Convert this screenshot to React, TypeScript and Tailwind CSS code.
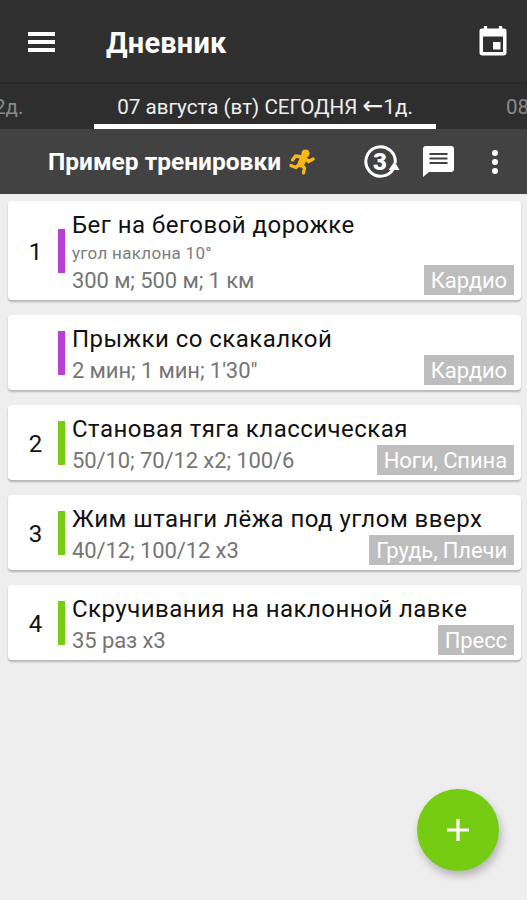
type Exercise = {
  num: string;
  title: string;
  note?: string;
  sets: string;
  tag: string;
  color: string;
};

const exercises: Exercise[] = [
  { num: '1', title: 'Бег на беговой дорожке', note: 'угол наклона 10°', sets: '300 м; 500 м; 1 км', tag: 'Кардио', color: 'bg-[#b93fd3]' },
  { num: '', title: 'Прыжки со скакалкой', sets: '2 мин; 1 мин; 1\'30"', tag: 'Кардио', color: 'bg-[#b93fd3]' },
  { num: '2', title: 'Становая тяга классическая', sets: '50/10; 70/12 x2; 100/6', tag: 'Ноги, Спина', color: 'bg-[#76cc12]' },
  { num: '3', title: 'Жим штанги лёжа под углом вверх', sets: '40/12; 100/12 x3', tag: 'Грудь, Плечи', color: 'bg-[#76cc12]' },
  { num: '4', title: 'Скручивания на наклонной лавке', sets: '35 раз x3', tag: 'Пресс', color: 'bg-[#76cc12]' },
];

function CalendarIcon() {
  return (
    <svg className="ml-auto h-8 w-[30px]" viewBox="0 0 30 32" fill="none">
      <path d="M7.500 1v6M22.500 1v6" stroke="white" strokeWidth="3.2" />
      <path d="M4 3.500h22a2.500 2.500 0 0 1 2.500 2.500v21.500a3 3 0 0 1-3 3h-21a3 3 0 0 1-3-3V6a2.500 2.500 0 0 1 2.500-2.500z" fill="white" />
      <path d="M5 11.500h20v15.500H5z" fill="#303030" />
      <path d="M15 17h7.500v7.500H15z" fill="white" />
    </svg>
  );
}

function RunnerIcon() {
  return (
    <svg className="ml-2 h-[26px] w-[26px]" viewBox="0 0 26 26" fill="none" stroke="#fcb714" strokeLinecap="round" strokeLinejoin="round">
      <circle cx="16.500" cy="4.500" r="4" fill="#fcb714" stroke="none" />
      <path d="M14.500 8.500l-2.500 6.500" strokeWidth="7" />
      <path d="M13 8L6.500 7L3.500 11" strokeWidth="3.300" />
      <path d="M16.500 9.500L19.500 12.500l4.500-2.500" strokeWidth="3.300" />
      <path d="M10.500 15L7 18.500L2 16.500" strokeWidth="3.300" />
      <path d="M12.500 15.500l3 3.500l-1 5" strokeWidth="3.300" />
    </svg>
  );
}

function RepeatIcon() {
  return (
    <div className="relative flex h-9 w-9 items-center pl-[9px]">
      <svg className="absolute inset-0 h-9 w-9" viewBox="0 0 36 36" fill="none">
        <path d="M29.500 24.500A14.700 14.700 0 1 1 31.200 19" stroke="white" strokeWidth="3" />
        <path d="M24.500 26l6-8.500 5 8.500z" fill="white" />
      </svg>
      <span className="relative text-[24px] leading-none font-black">3</span>
    </div>
  );
}

function CommentIcon() {
  return (
    <svg className="h-[31px] w-[31px]" viewBox="0 0 31 31">
      <path d="M3 0h25a3 3 0 0 1 3 3v20a3 3 0 0 1-3 3H6l-6 5V3a3 3 0 0 1 3-3z" fill="white" />
      <path d="M6.500 8h18M6.500 12.500h18M6.500 17h18" stroke="#424242" strokeWidth="2" />
    </svg>
  );
}

function ExerciseCard({ item }: { item: Exercise }) {
  return (
    <div
      className={`flex w-[513px] items-center rounded-[4px] bg-white shadow-[0_2px_2px_rgba(0,0,0,0.24)] ${item.note ? 'h-[99px]' : 'h-[75px]'}`}
    >
      <div className="w-[50px] pt-[3px] pl-[5px] text-center text-[24px] leading-none">{item.num}</div>
      <div className={`h-11 w-[7px] ${item.color}`} />
      <div className="flex h-full flex-1 flex-col pt-[9px] pl-[7px]">
        <div className="h-[31px] text-[24px] leading-[31px] tracking-[0.47px] whitespace-nowrap">{item.title}</div>
        {item.note && <div className="h-[24px] text-[17px] leading-[25px] tracking-[0.300px] text-[#7d7d7d]">{item.note}</div>}
        <div className="flex h-[30px] items-center pr-[7px]">
          <span className="pt-px text-[22px] leading-none tracking-[-0.1px] text-[#757575]">{item.sets}</span>
          <span className="ml-auto h-[30px] bg-[#bdbdbd] px-[7px] text-[22px] leading-[32px] tracking-[-0.1px] text-white">{item.tag}</span>
        </div>
      </div>
    </div>
  );
}

export default function App() {
  return (
    <div className="h-[900px] w-[527px] overflow-hidden bg-[#eeeeee] font-['Roboto',sans-serif] text-[#111]">
      {/* App bar */}
      <header className="flex h-[84px] items-center border-b-2 border-[#292929] bg-[#303030] pr-[19px] pl-7 text-white">
        <div className="flex flex-col gap-1 pt-px">
          <div className="h-[4px] w-[27px] bg-white" />
          <div className="h-[4px] w-[27px] bg-white" />
          <div className="h-[4px] w-[27px] bg-white" />
        </div>
        <h1 className="mt-[4px] ml-[51px] text-[29px] leading-none font-bold tracking-[0.2px]">Дневник</h1>
        <CalendarIcon />
      </header>

      {/* Day tabs */}
      <nav className="flex h-[45px] w-[540px] bg-[#2e2e2e] text-[20.600px] leading-[47px] whitespace-nowrap">
        <div className="w-[94px] text-[#8a8a8a]">
          <span className="-ml-[6px]">2д.</span>
        </div>
        <div className="flex h-[45px] w-[342px] justify-center border-b-[5px] border-white text-[#eeeeee]">
          <span>07 августа (вт) СЕГОДНЯ</span>
          <span className="ml-[5px] font-['DejaVu_Sans',sans-serif] text-[25px] leading-[43px]">←</span>
          <span>1д.</span>
        </div>
        <div className="pl-[70px] text-[#8a8a8a]">08</div>
      </nav>

      {/* Workout title */}
      <div className="flex h-[65px] items-center bg-[#424242] pl-12 text-white">
        <h2 className="pt-[2px] text-[24.500px] leading-none font-bold whitespace-nowrap">Пример тренировки</h2>
        <RunnerIcon />
        <div className="ml-auto flex items-center pr-[29px]">
          <RepeatIcon />
          <div className="ml-[23px]">
            <CommentIcon />
          </div>
          <div className="ml-[38px] flex flex-col gap-[3px]">
            <div className="h-[6px] w-[6px] rounded-full bg-white" />
            <div className="h-[6px] w-[6px] rounded-full bg-white" />
            <div className="h-[6px] w-[6px] rounded-full bg-white" />
          </div>
        </div>
      </div>

      <main className="flex flex-col gap-[15px] pt-[7px] pl-2">
        {exercises.map((item) => (
          <ExerciseCard key={item.title} item={item} />
        ))}
      </main>

      {/* Add button */}
      <button className="fixed right-7 bottom-[29px] flex h-[82px] w-[82px] items-center justify-center rounded-full bg-[#76cc12] shadow-[2px_5px_8px_rgba(0,0,0,0.25)]">
        <svg className="h-[22px] w-[22px]" viewBox="0 0 22 22">
          <path d="M11 0v22M0 11h22" stroke="white" strokeWidth="3.200" />
        </svg>
      </button>
    </div>
  );
}
